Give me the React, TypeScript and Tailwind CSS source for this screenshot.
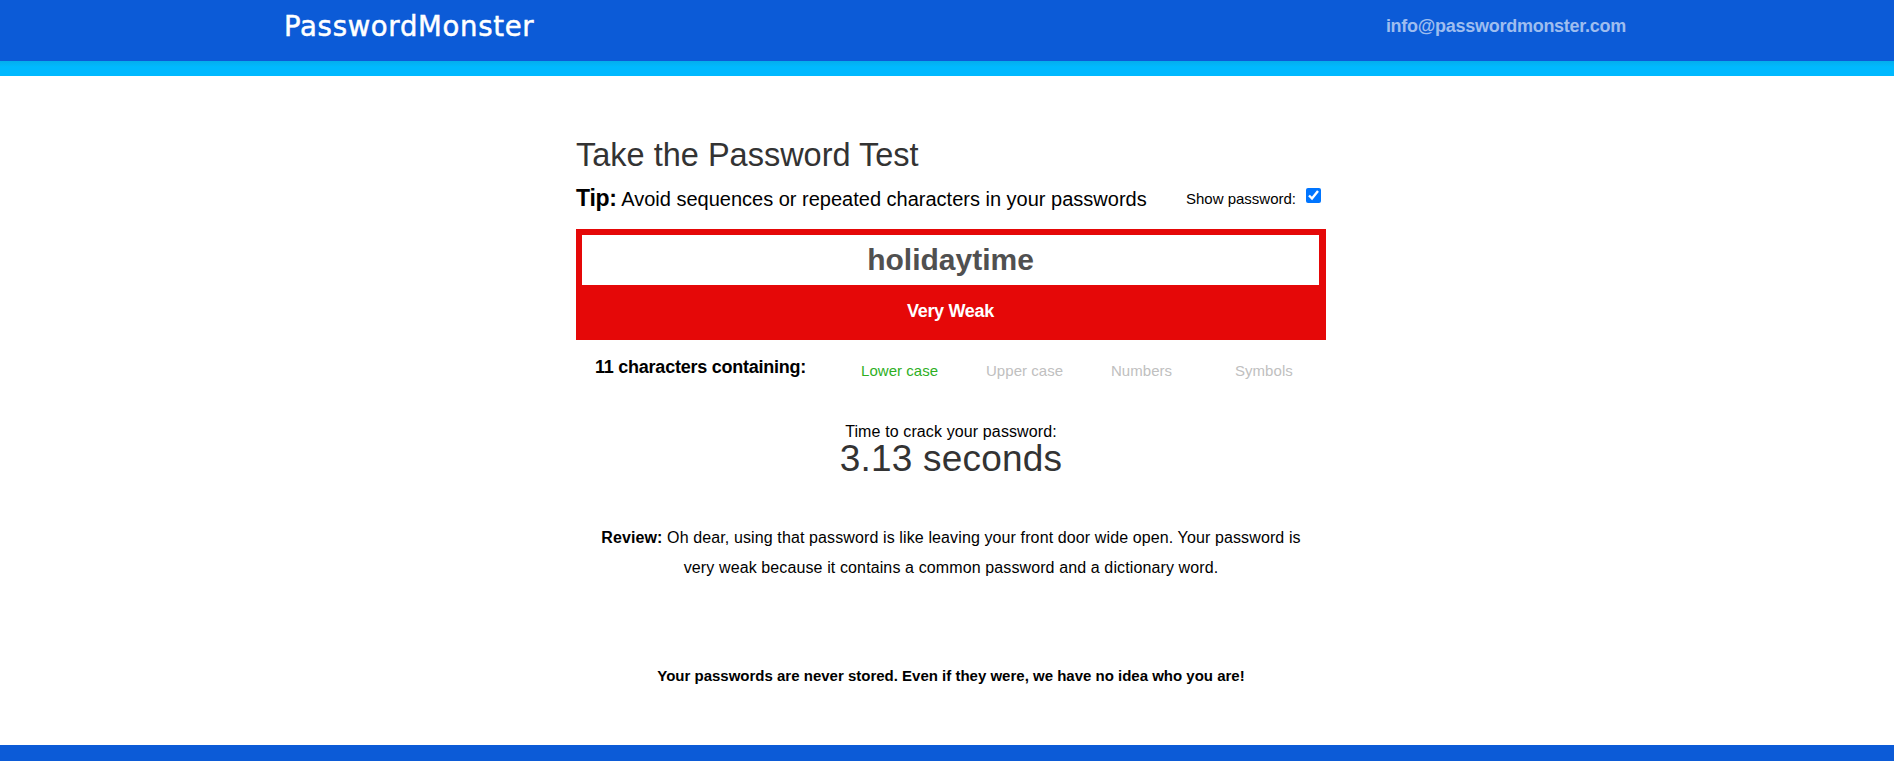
import { useState } from "react";

const kinds = [
  { label: "Lower case", active: true, width: "w-[125px]" },
  { label: "Upper case", active: false, width: "w-[125px]" },
  { label: "Numbers", active: false, width: "w-[124px]" },
  { label: "Symbols", active: false, width: "w-[90px]" },
];

function Header() {
  return (
    <header className="flex h-[61px] shrink-0 items-start justify-between bg-[#0c5bd7] pr-[268px] pl-[284px]">
      <div className="pt-[8px] font-['DejaVu_Sans',sans-serif] text-[27.5px] leading-9 tracking-[0.7px] whitespace-nowrap text-white [-webkit-text-stroke:0.5px_white]">
        PasswordMonster
      </div>
      <a className="pt-[14px] text-[18px] leading-6 font-bold tracking-[-0.27px] whitespace-nowrap text-[#9ebdef]">
        info@passwordmonster.com
      </a>
    </header>
  );
}

export default function App() {
  const [shown, setShown] = useState(true);
  const [password, setPassword] = useState("holidaytime");
  return (
    <div className="flex h-[761px] flex-col overflow-hidden bg-white font-['Liberation_Sans',Arial,sans-serif] text-black">
      <Header />
      <div className="h-[15px] shrink-0 bg-linear-to-b from-[#04aeed] to-[#00b9ff] to-40%" />
      <main className="ml-[576px] flex w-[750px] flex-1 flex-col">
        <h1 className="mt-[59px] h-10 text-[32.5px] leading-10 whitespace-nowrap text-[#333]">
          Take the Password Test
        </h1>
        <div className="mt-[9px] flex h-[29px] items-start whitespace-nowrap">
          <p className="text-[20px] leading-7">
            <b className="text-[23px] tracking-[-0.25px]">Tip:</b> Avoid sequences or repeated characters in your passwords
          </p>
          <label className="ml-auto flex items-baseline pt-[3px] pr-[5px] text-[15px] leading-6">
            Show password:
            <input
              type="checkbox"
              checked={shown}
              onChange={(e) => setShown(e.target.checked)}
              className="ml-[10px] h-[15px] w-[15px] -translate-y-px"
            />
          </label>
        </div>
        <section className="mt-[16px] h-[111px] bg-[#e50808] pt-[6px] pr-[7px] pl-[6px]">
          <input
            type={shown ? "text" : "password"}
            value={password}
            onChange={(e) => setPassword(e.target.value)}
            className="block h-[50px] w-full bg-white text-center text-[30px] font-bold text-[#505050] outline-none"
          />
          <div className="pt-[14px] text-center text-[18px] leading-6 font-bold tracking-[-0.3px] text-white">Very Weak</div>
        </section>
        <div className="flex h-[50px] items-start whitespace-nowrap">
          <div className="w-[285px] pt-[15px] pl-[19px] text-[18px] leading-6 font-bold tracking-[-0.24px]">11 characters containing:</div>
          {kinds.map((k) => (
            <div
              key={k.label}
              className={`${k.width} pt-[19px] text-[15px] leading-6 tracking-[0.04px] ${k.active ? "text-[#2eaf1f]" : "text-[#c0c0c0]"}`}
            >
              {k.label}
            </div>
          ))}
        </div>
        <div className="mt-[32px] text-center text-[16px] leading-5 tracking-[0.12px]">Time to crack your password:</div>
        <div className="-mt-px h-[41px] text-center text-[37px] leading-9 tracking-[0.2px] text-[#333]">3.13 seconds</div>
        <p className="mt-[41px] text-center text-[16px] leading-[30px] tracking-[0.115px]">
          <b>Review:</b> Oh dear, using that password is like leaving your front door wide open. Your password is
          <br />
          very weak because it contains a common password and a dictionary word.
        </p>
        <p className="mt-[81px] text-center text-[15px] leading-6 font-bold">
          Your passwords are never stored. Even if they were, we have no idea who you are!
        </p>
      </main>
      <footer className="h-[16px] shrink-0 bg-[#0c5bd7]" />
    </div>
  );
}
